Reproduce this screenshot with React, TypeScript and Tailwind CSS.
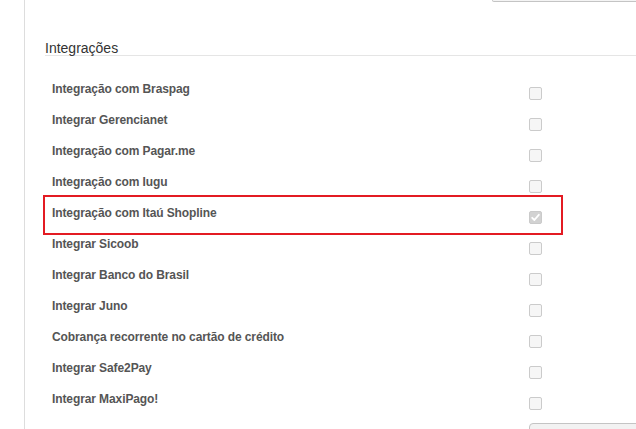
import React from "react";

const rows = [
  "Integração com Braspag",
  "Integrar Gerencianet",
  "Integração com Pagar.me",
  "Integração com Iugu",
  "Integração com Itaú Shopline",
  "Integrar Sicoob",
  "Integrar Banco do Brasil",
  "Integrar Juno",
  "Cobrança recorrente no cartão de crédito",
  "Integrar Safe2Pay",
  "Integrar MaxiPago!",
];

function Box({ checked }: { checked?: boolean }) {
  if (checked) {
    return (
      <div className="mt-[14px] w-[13px] h-[13px] rounded-[2px] border border-[#cacaca] bg-[#d2d2d2] flex items-center justify-center">
        <svg width="9" height="9" viewBox="0 0 9 9">
          <path d="M1.2 4.8 L3.4 7 L7.8 1.8" fill="none" stroke="#ffffff" strokeWidth="1.8" strokeLinecap="round" strokeLinejoin="round" />
        </svg>
      </div>
    );
  }
  return <div className="mt-[14px] w-[13px] h-[13px] rounded-[2px] border border-[#cbcbcb] bg-[#f6f6f6]" />;
}

export default function App() {
  return (
    <div
      className="w-[636px] h-[429px] overflow-hidden bg-white flex"
      style={{ fontFamily: '"Liberation Sans", Arial, sans-serif' }}
    >
      <div className="w-[24px] shrink-0" />
      <div className="flex-1 min-w-0 border-l border-[#dddddd] pl-[20px] flex flex-col">
        <div className="ml-[447px] w-[200px] h-[2px] shrink-0 border border-t-0 border-[#c4c4c4] rounded-bl-[4px] bg-[#f4f4f4]" />
        <div className="mt-[39px] text-[14px] leading-[14px] text-[#333333] border-b border-[#e5e5e5]">
          Integrações
        </div>
        <div className="mt-[17px] flex flex-col">
          {rows.map((r, i) => (
            <div key={r} className="relative h-[31px] flex items-start">
              <div className="w-[484px] pl-[7px] pt-[8px] text-[12px] leading-4 font-bold text-[#555555] tracking-[-0.1px]">
                {r}
              </div>
              <Box checked={i === 4} />
              {i === 4 && (
                <div className="absolute -left-[2px] -top-[2px] w-[520px] h-[40px] border-2 border-[#e31b23] pointer-events-none" />
              )}
            </div>
          ))}
        </div>
        <div className="mt-[9px] ml-[484px] w-[200px] h-[24px] shrink-0 border border-[#c4c4c4] rounded-tl-[4px] bg-[#f2f2f2]" />
      </div>
    </div>
  );
}
